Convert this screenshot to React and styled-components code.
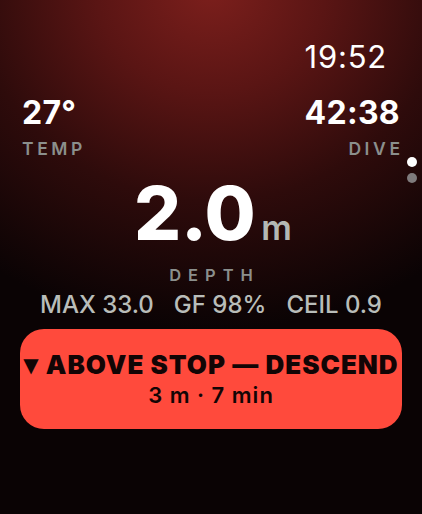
import React from "react"
import styled, { createGlobalStyle } from "styled-components"

const Global = createGlobalStyle`
  html, body {
    margin: 0;
    padding: 0;
    background: #000;
  }
  * {
    box-sizing: border-box;
  }
`

const Screen = styled.div`
  position: relative;
  width: 422px;
  height: 514px;
  overflow: hidden;
  font-family: Inter, "Noto Sans", sans-serif;
  color: #fff;
  background: radial-gradient(
    ellipse 380px 340px at 211px -10px,
    #7c1f1c 0%,
    #5a1514 30%,
    #2e0b0b 62%,
    #0a0304 100%
  );
  display: flex;
  flex-direction: column;
`

const Clock = styled.div`
  align-self: flex-end;
  margin: 40px 35px 0 0;
  font-size: 31px;
  line-height: 34px;
  font-weight: 400;
  letter-spacing: 0.8px;
`

const StatsRow = styled.div`
  display: flex;
  justify-content: space-between;
  padding: 22px 22px 0 22px;
`

const Stat = styled.div`
  display: flex;
  flex-direction: column;
  align-items: ${(p) => (p.$right ? "flex-end" : "flex-start")};
`

const StatValue = styled.div`
  font-size: 32px;
  line-height: 34px;
  font-weight: 700;
  letter-spacing: 0.3px;
`

const StatLabel = styled.div`
  margin-top: 9px;
  font-size: 17.5px;
  line-height: 20px;
  font-weight: 600;
  letter-spacing: 3.6px;
  margin-right: -3.6px;
  color: #8b8f8c;
`

const PageDots = styled.div`
  position: absolute;
  right: 5px;
  top: 157px;
  display: flex;
  flex-direction: column;
  gap: 6px;
`

const Dot = styled.span`
  width: 10px;
  height: 10px;
  border-radius: 50%;
  background: ${(p) => (p.$active ? "#ffffff" : "#7f7b7c")};
`

const Depth = styled.div`
  display: flex;
  flex-direction: column;
  align-items: center;
  margin-top: 21px;
`

const DepthLine = styled.div`
  display: flex;
  align-items: baseline;
  gap: 6px;
  margin-left: 4px;
`

const DepthValue = styled.span`
  font-size: 74px;
  line-height: 66px;
  font-weight: 800;
  letter-spacing: -0.3px;
`

const DepthUnit = styled.span`
  font-size: 34px;
  font-weight: 600;
  color: #b4b8b4;
`

const DepthLabel = styled.div`
  margin-top: 18px;
  font-size: 16.5px;
  line-height: 18px;
  font-weight: 600;
  letter-spacing: 7px;
  margin-right: -7px;
  color: #8b8f8c;
`

const Metrics = styled.div`
  margin-top: 7px;
  display: flex;
  gap: 20px;
  font-size: 24px;
  line-height: 28px;
  font-weight: 500;
  color: #b9bdb9;
`

const Alert = styled.div`
  margin: 10px 20px 0 20px;
  height: 100px;
  border-radius: 24px;
  background: #ff4a3c;
  color: #120505;
  display: flex;
  flex-direction: column;
  align-items: center;
  justify-content: center;
  gap: 4px;
`

const AlertTitle = styled.div`
  display: flex;
  align-items: center;
  gap: 6px;
  font-size: 26px;
  line-height: 28px;
  font-weight: 900;
  white-space: nowrap;
  letter-spacing: 1px;
`

const Arrow = styled.span`
  font-size: 20px;
  line-height: 20px;
  font-family: "DejaVu Sans", sans-serif;
`

const AlertDetail = styled.div`
  font-size: 22px;
  line-height: 24px;
  font-weight: 600;
  letter-spacing: 1px;
`

export default function App() {
  return (
    <>
      <Global />
      <Screen>
        <Clock>19:52</Clock>
        <StatsRow>
          <Stat>
            <StatValue>27°</StatValue>
            <StatLabel>TEMP</StatLabel>
          </Stat>
          <Stat $right>
            <StatValue>42:38</StatValue>
            <StatLabel>DIVE</StatLabel>
          </Stat>
        </StatsRow>
        <PageDots>
          <Dot $active />
          <Dot />
        </PageDots>
        <Depth>
          <DepthLine>
            <DepthValue>2.0</DepthValue>
            <DepthUnit>m</DepthUnit>
          </DepthLine>
          <DepthLabel>DEPTH</DepthLabel>
          <Metrics>
            <span>MAX 33.0</span>
            <span>GF 98%</span>
            <span>CEIL 0.9</span>
          </Metrics>
        </Depth>
        <Alert>
          <AlertTitle>
            <Arrow>▼</Arrow>
            ABOVE STOP — DESCEND
          </AlertTitle>
          <AlertDetail>3 m · 7 min</AlertDetail>
        </Alert>
      </Screen>
    </>
  )
}
